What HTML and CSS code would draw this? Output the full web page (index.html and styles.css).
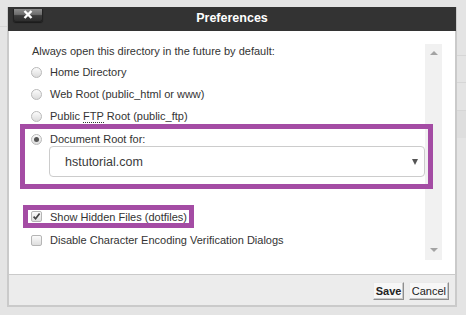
FILE: index.html
```html
<!DOCTYPE html>
<html>
<head>
<meta charset="utf-8">
<link rel="stylesheet" href="styles.css">
</head>
<body>
<div class="page">
  <div class="dialog">
    <div class="titlebar">
      <button class="close" type="button" aria-label="Close">
        <svg width="10" height="9" viewBox="0 0 10 9"><path d="M1.5 1 L8.5 8 M8.5 1 L1.5 8" stroke="#fff" stroke-width="2.4" stroke-linecap="butt"/></svg>
      </button>
      <div class="title">Preferences</div>
    </div>
    <div class="body">
      <div class="content">
        <div class="intro">Always open this directory in the future by default:</div>
        <div class="row first"><span class="radio"></span><span class="label">Home Directory</span></div>
        <div class="row"><span class="radio"></span><span class="label">Web Root (public_html or www)</span></div>
        <div class="row"><span class="radio"></span><span class="label">Public <abbr class="abbr">FTP</abbr> Root (public_ftp)</span></div>
        <div class="hl hl-doc">
          <div class="row doc"><span class="radio checked"></span><span class="label">Document Root for:</span></div>
          <div class="select"><span class="select-text">hstutorial.com</span><span class="caret"></span></div>
        </div>
        <div class="hl hl-hidden">
          <div class="row chk"><span class="check on"><svg width="9" height="9" viewBox="0 0 9 9"><path d="M1.6 4.6 L3.6 6.8 L7.6 1.6" stroke="#444" stroke-width="1.7" fill="none"/></svg></span><span class="label">Show Hidden Files (dotfiles)</span></div>
        </div>
        <div class="row chk disable"><span class="check"></span><span class="label">Disable Character Encoding Verification Dialogs</span></div>
      </div>
      <div class="scrollbar">
        <span class="arrow up"></span>
        <span class="arrow down"></span>
      </div>
    </div>
    <div class="footer">
      <button class="btn save" type="button">Save</button>
      <button class="btn" type="button">Cancel</button>
    </div>
  </div>
</div>
</body>
</html>
```

FILE: styles.css
```css
html, body {
  margin: 0;
  padding: 0;
}
body {
  width: 466px;
  height: 315px;
  overflow: hidden;
  background: #e4e4e4;
  background-image:
    linear-gradient(#d6d6d6, #d6d6d6),
    linear-gradient(#d6d6d6, #d6d6d6),
    linear-gradient(#d6d6d6, #d6d6d6),
    linear-gradient(#d6d6d6, #d6d6d6),
    linear-gradient(#dedede, #dedede);
  background-size: 8px 1px, 10px 1px, 10px 1px, 10px 1px, 10px 28px;
  background-position: 0 26px, 457px 55px, 457px 82px, 457px 110px, 457px 110px;
  background-repeat: no-repeat;
  font-family: "Liberation Sans", Arial, sans-serif;
  color: #333;
}
.page {
  padding: 7px 0 0 7px;
}
.dialog {
  width: 446px;
  border: 2px solid #cacaca;
  border-top: 0;
  background: #fff;
}
.titlebar {
  position: relative;
  height: 24px;
  margin: 0 -1px;
  background: #333333;
}
.close {
  position: absolute;
  left: 5px;
  top: 2px;
  width: 30px;
  height: 13px;
  padding: 0;
  border: 1px solid #222;
  border-top: 0;
  border-radius: 0 0 3px 3px;
  background: linear-gradient(#8c8c8c 0%, #6e6e6e 45%, #3c3c3c 55%, #2e2e2e 100%);
  display: flex;
  align-items: center;
  justify-content: center;
  box-shadow: 0 1px 1px rgba(0,0,0,0.5);
}
.close svg {
  display: block;
  margin-top: -1px;
}
.title {
  text-align: center;
  color: #fff;
  font-weight: bold;
  font-size: 12.5px;
  line-height: 22px;
}
.body {
  display: flex;
  height: 243px;
  background: #fff;
}
.content {
  flex: 1;
  min-width: 0;
  padding: 13px 0 0 23px;
  font-size: 11px;
}
.intro {
  line-height: 14px;
  height: 14px;
}
.row {
  display: flex;
  align-items: center;
  height: 14px;
  line-height: 14px;
  margin-top: 8px;
  margin-left: -1px;
  white-space: nowrap;
}
.row.first {
  margin-top: 7px;
}
.radio {
  width: 9px;
  height: 9px;
  border: 1px solid #b9b9b9;
  border-radius: 50%;
  background: linear-gradient(#fbfbfb, #dcdcdc);
  flex: none;
  display: flex;
  align-items: center;
  justify-content: center;
}
.radio.checked::after {
  content: "";
  width: 5px;
  height: 5px;
  border-radius: 50%;
  background: #555;
}
.label {
  margin-left: 8px;
}
.abbr {
  text-decoration: none;
  border-bottom: 1px dotted #333;
  line-height: 11px;
  display: inline-block;
}
.hl {
  position: relative;
  box-sizing: border-box;
  border: 5px solid #a44ca4;
}
.hl-doc {
  width: 413px;
  margin: 1px 0 0 -12px;
  padding: 3px 3px 7px 6px;
}
.row.doc {
  margin: 0;
}
.select {
  box-sizing: border-box;
  width: 376px;
  height: 31px;
  margin-left: 18px;
  border: 1px solid #cccccc;
  border-radius: 4px;
  background: #fff;
  display: flex;
  align-items: center;
  justify-content: space-between;
  padding: 0 6px 0 15px;
}
.select-text {
  font-size: 12.5px;
  color: #3a3a3a;
}
.caret {
  width: 0;
  height: 0;
  border-left: 3.5px solid transparent;
  border-right: 3.5px solid transparent;
  border-top: 6px solid #555;
}
.hl-hidden {
  width: 171px;
  height: 23px;
  margin: 16px 0 0 -9px;
  padding: 0 0 0 3px;
}
.row.chk {
  margin-top: 0;
  margin-left: 0;
  height: 13px;
  line-height: 13px;
}
.hl-hidden .label {
  margin-top: 2px;
}
.row.disable {
  margin-top: 5px;
  margin-left: -1px;
  height: 14px;
  line-height: 14px;
}
.check {
  box-sizing: border-box;
  width: 11px;
  height: 11px;
  border: 1px solid #b5b5b5;
  border-radius: 2px;
  background: linear-gradient(#fbfbfb, #dedede);
  flex: none;
  display: flex;
  align-items: center;
  justify-content: center;
}
.check svg {
  display: block;
}
.scrollbar {
  flex: none;
  width: 17px;
  height: 216px;
  margin: 13px 13px 0 0;
  background: #f1f1f1;
  display: flex;
  flex-direction: column;
  align-items: center;
  justify-content: space-between;
  padding: 7px 0 8px;
  box-sizing: border-box;
}
.arrow {
  width: 0;
  height: 0;
  border-left: 4px solid transparent;
  border-right: 4px solid transparent;
}
.arrow.up {
  border-bottom: 4px solid #a3a3a3;
}
.arrow.down {
  border-top: 4px solid #a3a3a3;
}
.footer {
  border-top: 1px solid #cacaca;
  background: #ececec;
  display: flex;
  justify-content: flex-end;
  align-items: flex-start;
  gap: 5px;
  padding: 7px 6px 0 0;
  box-sizing: border-box;
  height: 31px;
}
.btn {
  box-sizing: border-box;
  height: 18px;
  padding: 0 2px;
  margin: 0;
  font-family: "Liberation Sans", Arial, sans-serif;
  font-size: 11px;
  color: #222;
  background: #f7f7f7;
  border: 1px solid;
  border-color: #eaeaea #8e8e8e #8e8e8e #eaeaea;
  box-shadow: inset -1px -1px 0 #c9c9c9;
  line-height: 15px;
}
.btn.save {
  font-weight: bold;
  width: 31px;
}
```
